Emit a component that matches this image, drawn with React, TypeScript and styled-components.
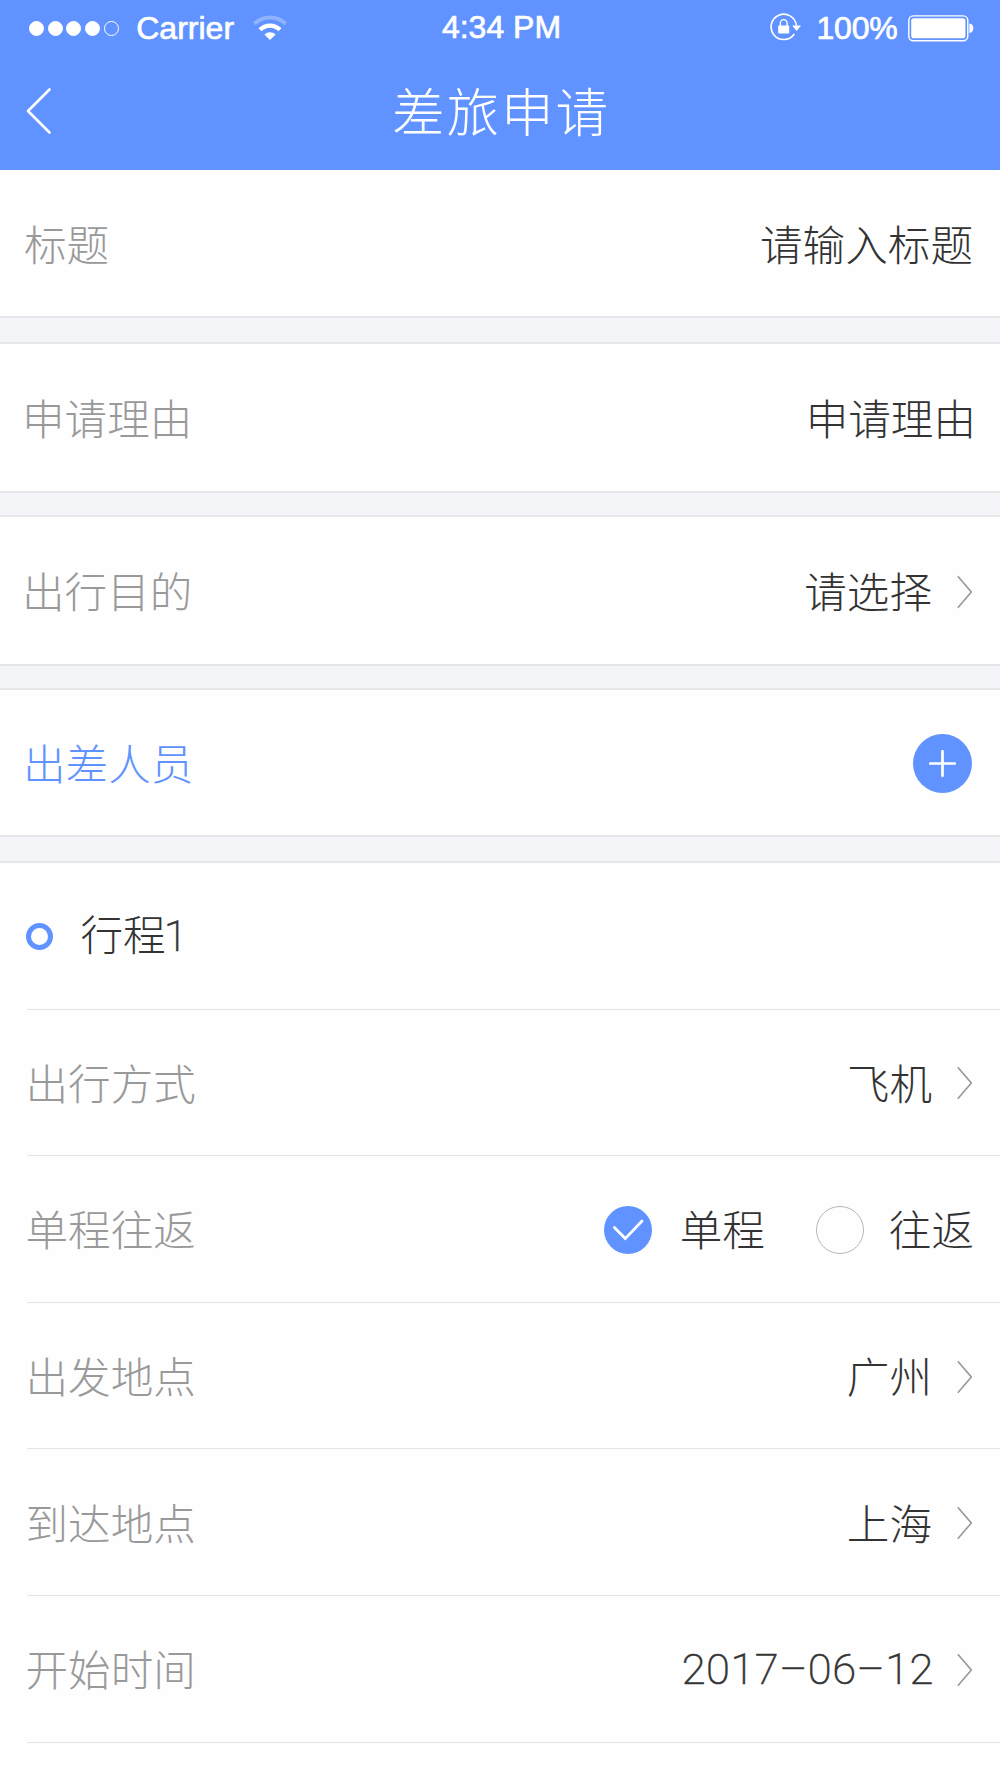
import React, { useState } from "react";
import styled, { createGlobalStyle } from "styled-components";

const BLUE = "#6093ff";

const GlobalStyle = createGlobalStyle`
  * { box-sizing: border-box; }
  body { margin: 0; background: #fff; }
`;

const Screen = styled.div`
  display: flex;
  flex-direction: column;
  width: 1000px;
  height: 1778px;
  overflow: hidden;
  background: #fefefe;
  font-family: "Noto Sans CJK SC", sans-serif;
  font-weight: 300;
  font-size: 42.6px;
  line-height: 60px;
  color: #333;
`;

const Header = styled.header`
  display: flex;
  flex-direction: column;
  height: 170px;
  flex: none;
  background: ${BLUE};
  color: #fff;
`;

const StatusBar = styled.div`
  display: grid;
  grid-template-columns: 1fr auto 1fr;
  align-items: center;
  height: 54px;
  padding: 0 26px 0 29px;
`;

const StatusGroup = styled.div<{ $end?: boolean }>`
  display: flex;
  align-items: center;
  justify-content: ${(p) => (p.$end ? "flex-end" : "flex-start")};
`;

const StatusText = styled.span<{ $spacing?: number; $up?: number }>`
  font-family: "Liberation Sans", Arial, sans-serif;
  font-weight: 400;
  font-size: 32px;
  line-height: 54px;
  letter-spacing: ${(p) => p.$spacing ?? 0}px;
  padding-bottom: ${(p) => p.$up ?? 0}px;
  -webkit-text-stroke: 0.7px #fff;
  white-space: nowrap;
`;

const Dots = styled.div`
  display: flex;
  gap: 3.7px;
  margin-right: 17.5px;
`;

const Dot = styled.i<{ $empty?: boolean }>`
  width: 15px;
  height: 15px;
  border-radius: 50%;
  border: 1.4px solid #fff;
  background: ${(p) => (p.$empty ? "transparent" : "#fff")};
`;

const Icon = styled.svg`
  display: block;
  flex: none;
  fill: none;
`;

const WifiIcon = styled(Icon)`
  margin-left: 18px;
`;

const LockIcon = styled(Icon)`
  margin: 0 14px 2px 0;
`;

const BatteryIcon = styled(Icon)`
  margin-left: 10.5px;
`;

const NavBar = styled.div`
  display: grid;
  grid-template-columns: 60px 1fr 60px;
  align-items: center;
  height: 116px;
  padding: 0 0 2px 25px;
`;

const BackButton = styled.button`
  display: flex;
  padding: 0;
  border: 0;
  background: none;
`;

const Title = styled.h1`
  margin: 0;
  padding: 0 23px 5px 0;
  text-align: center;
  font-size: 52.5px;
  line-height: 76px;
  font-weight: 300;
  letter-spacing: 2px;
`;

const Gap = styled.div<{ $h: number }>`
  flex: none;
  height: ${(p) => p.$h}px;
  background: #f3f5f9;
  border-top: 2px solid #e4e6e8;
  border-bottom: 2px solid #e6e7e9;
`;

const Row = styled.div<{ $h: number; $left?: number; $right?: number }>`
  flex: none;
  display: flex;
  align-items: center;
  justify-content: space-between;
  height: ${(p) => p.$h}px;
  padding: 2px ${(p) => p.$right ?? 28}px 0 ${(p) => p.$left ?? 22}px;
`;

const TripSection = styled.section`
  display: flex;
  flex-direction: column;
  margin-left: 27px;
`;

const TripRow = styled(Row)`
  height: 146.6px;
  padding-left: 0;
  border-bottom: 1.6px solid #e5e5e5;
`;

const Text = styled.span`
  padding-bottom: 3px;
  white-space: nowrap;
`;

const Label = styled(Text)<{ $accent?: boolean }>`
  color: ${(p) => (p.$accent ? BLUE : "#999")};
`;

const TripLabel = styled(Label)`
  margin-left: -1.5px;
`;

const Value = styled.span`
  display: flex;
  align-items: center;
`;

const Digits = styled.span`
  font-family: Roboto, sans-serif;
  font-weight: 200;
  font-size: 43.4px;
  letter-spacing: 0.5px;
  -webkit-text-stroke: 0.5px #333;
`;

const DateText = styled(Digits)`
  margin-right: -2px;
`;

const TripNumber = styled(Digits)`
  margin-left: -2px;
`;

const ArrowIcon = styled(Icon)`
  margin-left: 24px;
`;

const AddButton = styled.button`
  display: flex;
  align-items: center;
  justify-content: center;
  width: 59px;
  height: 59px;
  padding: 0;
  border: 0;
  border-radius: 50%;
  background: ${BLUE};
`;

const TripTitle = styled.span`
  display: flex;
  align-items: center;
  gap: 27.5px;
`;

const Ring = styled.i`
  width: 27px;
  height: 27px;
  border: 5.6px solid ${BLUE};
  border-radius: 50%;
  margin-left: -1px;
`;

const Options = styled.div`
  display: flex;
  gap: 51px;
`;

const Option = styled.button<{ $gap: number }>`
  display: flex;
  align-items: center;
  gap: ${(p) => p.$gap}px;
  padding: 0;
  border: 0;
  background: none;
  font: inherit;
  color: inherit;
`;

const Radio = styled.i<{ $checked: boolean }>`
  display: flex;
  align-items: center;
  justify-content: center;
  width: 48px;
  height: 48px;
  border-radius: 50%;
  border: ${(p) => (p.$checked ? "0" : "1.3px solid #b8b8b8")};
  background: ${(p) => (p.$checked ? BLUE : "transparent")};
`;

const Arrow = () => (
  <ArrowIcon width="16" height="34" viewBox="0 0 16 34">
    <path d="M1.8 1.2 15.3 17 1.8 32.8" stroke="#999" strokeWidth="1.6" />
  </ArrowIcon>
);

const trips = [
  { name: "单程", gap: 27.5 },
  { name: "往返", gap: 25 },
];

export default function App() {
  const [trip, setTrip] = useState("单程");
  return (
    <Screen lang="zh-CN">
      <GlobalStyle />
      <Header>
        <StatusBar>
          <StatusGroup>
            <Dots>
              <Dot />
              <Dot />
              <Dot />
              <Dot />
              <Dot $empty />
            </Dots>
            <StatusText>Carrier</StatusText>
            <WifiIcon width="36" height="26" viewBox="0 0 36 26">
              <path d="M2.4 8.8A22.3 22.3 0 0 1 33.6 8.8" stroke="#fff" strokeOpacity=".3" strokeWidth="4" />
              <path d="M8 14.7A14.2 14.2 0 0 1 28 14.7" stroke="#fff" strokeWidth="4.2" />
              <path d="M18 25 12.4 19.4A8.4 8.4 0 0 1 23.6 19.4Z" fill="#fff" />
            </WifiIcon>
          </StatusGroup>
          <StatusText $up={2}>4:34 PM</StatusText>
          <StatusGroup $end>
            <LockIcon width="32" height="28" viewBox="0 0 32 28">
              <path d="M26.4 12.3A12.7 12.7 0 1 0 24.3 21" stroke="#fff" strokeWidth="1.6" />
              <path d="M22.2 12.6H31L26.6 18Z" fill="#fff" />
              <rect x="8.2" y="12.6" width="11" height="7.9" rx=".8" fill="#fff" />
              <path d="M10.3 13V10.2a3.4 3.6 0 0 1 6.8 0V13" stroke="#fff" strokeWidth="1.4" />
            </LockIcon>
            <StatusText $spacing={-0.2}>100%</StatusText>
            <BatteryIcon width="66" height="27" viewBox="0 0 66 27">
              <rect x=".8" y=".9" width="59" height="24.8" rx="4.5" stroke="#fff" strokeWidth="1.4" />
              <rect x="3.2" y="3.3" width="54.2" height="20" rx="2.6" fill="#fff" />
              <path d="M61.4 8.6c5.2 0 5.2 9.4 0 9.4Z" fill="#fff" />
            </BatteryIcon>
          </StatusGroup>
        </StatusBar>
        <NavBar>
          <BackButton aria-label="返回">
            <Icon width="27" height="48" viewBox="0 0 27 48">
              <path d="M24.5 2.5 3 24 24.5 45.5" stroke="#fff" strokeWidth="2.6" strokeLinecap="round" strokeLinejoin="round" />
            </Icon>
          </BackButton>
          <Title>差旅申请</Title>
        </NavBar>
      </Header>

      <Row $h={146} $left={24} $right={27}>
        <Label>标题</Label>
        <Text>请输入标题</Text>
      </Row>
      <Gap $h={28} />
      <Row $h={147} $right={24}>
        <Label>申请理由</Label>
        <Text>申请理由</Text>
      </Row>
      <Gap $h={26} />
      <Row $h={147}>
        <Label>出行目的</Label>
        <Value>
          <Text>请选择</Text>
          <Arrow />
        </Value>
      </Row>
      <Gap $h={26} />
      <Row $h={145} $left={23}>
        <Label $accent>出差人员</Label>
        <AddButton aria-label="添加">
          <Icon width="28" height="28" viewBox="0 0 28 28">
            <path d="M13.5 1.2V25.8M1.2 13.5H25.8" stroke="#fff" strokeWidth="2.7" strokeLinecap="round" />
          </Icon>
        </AddButton>
      </Row>
      <Gap $h={28} />

      <TripSection>
        <TripRow $h={147}>
          <TripTitle>
            <Ring />
            <Text>
              行程<TripNumber>1</TripNumber>
            </Text>
          </TripTitle>
        </TripRow>
        <TripRow $h={147}>
          <TripLabel>出行方式</TripLabel>
          <Value>
            <Text>飞机</Text>
            <Arrow />
          </Value>
        </TripRow>
        <TripRow $h={147} $right={26}>
          <TripLabel>单程往返</TripLabel>
          <Options>
            {trips.map(({ name, gap }) => (
              <Option key={name} $gap={gap} onClick={() => setTrip(name)}>
                <Radio $checked={trip === name}>
                  {trip === name && (
                    <Icon width="32" height="24" viewBox="0 0 32 24">
                      <path d="M2.4 9.4 13.3 20.6 30 3" stroke="#fff" strokeWidth="2.8" strokeLinecap="round" />
                    </Icon>
                  )}
                </Radio>
                <Text>{name}</Text>
              </Option>
            ))}
          </Options>
        </TripRow>
        <TripRow $h={147}>
          <TripLabel>出发地点</TripLabel>
          <Value>
            <Text>广州</Text>
            <Arrow />
          </Value>
        </TripRow>
        <TripRow $h={147}>
          <TripLabel>到达地点</TripLabel>
          <Value>
            <Text>上海</Text>
            <Arrow />
          </Value>
        </TripRow>
        <TripRow $h={147}>
          <TripLabel>开始时间</TripLabel>
          <Value>
            <DateText>2017–06–12</DateText>
            <Arrow />
          </Value>
        </TripRow>
      </TripSection>
    </Screen>
  );
}
